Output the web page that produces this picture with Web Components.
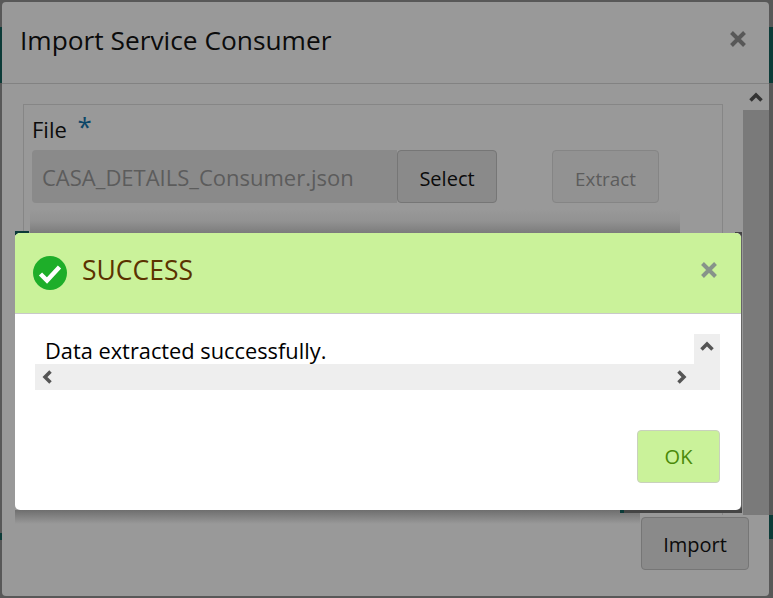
<!DOCTYPE html>
<html><head><meta charset="utf-8">
<style>
html,body{margin:0;padding:0;height:598px;overflow:hidden;background:#585858;font-family:"Open Sans","Noto Sans",sans-serif}
</style></head><body>
<template id="t-backdrop"><style>
:host{display:block;position:relative;width:773px;height:598px;box-sizing:border-box;padding:2px 4px 2px 2px;overflow:hidden}
.teal{position:absolute;background:#0c3b38}
</style>
<div class="teal" style="left:0;top:27px;width:2px;height:56px"></div>
<div class="teal" style="right:0;top:27px;width:4px;height:56px"></div>
<div class="teal" style="left:0;top:533px;width:2px;height:7px"></div>
<div class="teal" style="right:0;top:515px;width:4px;height:24px"></div>
<slot></slot></template>

<template id="t-dialog"><style>
:host{display:flex;flex-direction:column;width:767px;height:594px;background:#999;border-radius:4px;overflow:hidden;position:relative}
header{flex:none;height:82px;box-sizing:border-box;border-bottom:1px solid #828282;display:flex;align-items:center;justify-content:space-between;padding:0 22px 5px 18px;font-size:26.3px;color:#0b0b0b}
header svg{margin-bottom:2px}
.main{flex:none;height:431px;display:flex}
.content{flex:1;min-width:0;padding:20px 20px 0 21px;overflow:hidden;position:relative}
.track{flex:none;width:26px;background:#7a7a7a;display:flex;flex-direction:column}
.up{height:26px;background:#999;display:flex;align-items:center;justify-content:center}
footer{flex:1;display:flex;justify-content:flex-end;align-items:flex-start;padding:2px 20px 0 0}
svg{display:block}
</style>
<header><span>Import Service Consumer</span>
<svg width="18" height="18" viewBox="0 0 18 18"><path d="M2.500 2.500 15.500 15.500M15.500 2.500 2.500 15.500" stroke="#585858" stroke-width="4" fill="none"/></svg></header>
<div class="main"><div class="content"><slot></slot></div>
<div class="track"><div class="up"><svg width="14" height="10" viewBox="0 0 14 10"><path d="M1.500 8.500 7 3l5.500 5.500" stroke="#333" stroke-width="3.500" fill="none"/></svg></div></div></div>
<footer><slot name="foot"></slot></footer></template>

<template id="t-panel"><style>
:host{display:block;width:700px;height:420px;box-sizing:border-box;border:1px solid #868686;padding:9px 8px;position:relative}
label{display:block;font-size:22px;line-height:31px;color:#0b0b0b;height:36px}
label b{font-weight:400;color:#0b4668;font-size:26px;margin-left:5px;line-height:20px;vertical-align:2px}
.row{display:flex;align-items:flex-start}
.input{width:365px;height:53px;background:#8a8a8a;border-radius:4px 0 0 4px;box-sizing:border-box;padding:0 10px;font-size:22px;line-height:55px;color:#5c5c5c;white-space:nowrap}
.gap{width:55px}
.bar{margin:6px 0 0 -2px;width:650px;height:24px;background:linear-gradient(#999,#929292 50%,#7c7c7c)}
</style>
<label>File <b>*</b></label>
<div class="row"><div class="input">CASA_DETAILS_Consumer.json</div><app-button style="width:100px;padding:4px 0 0">Select</app-button><div class="gap"></div><app-button dim style="width:107px;padding:4px 0 0;font-size:18.8px">Extract</app-button></div>
<div class="bar"></div></template>

<template id="t-button"><style>
:host{display:inline-flex;align-items:center;justify-content:center;box-sizing:border-box;height:53px;padding:0 21px;border:1px solid #767676;border-radius:4px;background:#8a8a8a;color:#0b0b0b;font-size:20px}
:host([dim]){background:#929292;border-color:#858585;color:#5c5c5c}
:host([ok]){background:#caf29a;border-color:#c9d1bd;color:#4a8a0a;width:83px;padding:0}
</style><slot></slot></template>

<template id="t-modal"><style>
:host{display:block;position:absolute;left:15px;top:233px;width:726px;height:277px}
.card{position:relative;height:100%;background:#fff;border-radius:5px;overflow:hidden;box-shadow:1px 0 0 #666}
.u{position:absolute}
header{height:80px;background:#caf29a;border-bottom:1px solid #c9c9c9;display:flex;align-items:center;padding:0 23px 0 18px;font-size:26.5px;color:#5b3200}
header span{flex:1;margin:0 0 6px 15px}
header svg:last-child{margin-bottom:6px}
.box{margin:20px 21px 0 20px;height:56px;display:grid;grid-template-columns:1fr 26px;grid-template-rows:30px 26px;font-size:21.8px;color:#000}
.text{padding-left:10px;line-height:34px;white-space:nowrap;overflow:hidden}
.v{background:#eee;display:flex;justify-content:center;padding-top:7px;box-sizing:border-box}
.h{grid-column:1/3;background:#eee;display:flex;justify-content:space-between;align-items:center;padding:0 33px 0 7px}
.foot{display:flex;justify-content:flex-end;padding:40px 21px 0 0}
svg{display:block}
</style>
<div class="u" style="left:0;top:277px;width:625px;height:14px;background:linear-gradient(#6e6e6e,#999)"></div>
<div class="u" style="left:0;top:-2px;width:14px;height:4px;background:#0c3b38"></div>
<div class="u" style="right:-1px;top:-1px;width:7px;height:7px;background:#444"></div>
<div class="u" style="left:605px;top:272px;width:122px;height:8px;background:#454545;border-left:4px solid #0c3b38;box-sizing:border-box"></div>
<div class="card">
<header><svg width="34" height="34" viewBox="0 0 34 34"><circle cx="17" cy="17" r="17" fill="#1eae29"/><path d="M7.500 18 14 24.500 26.500 11" stroke="#fff" stroke-width="4.500" fill="none"/></svg><span>SUCCESS</span>
<svg width="18" height="18" viewBox="0 0 18 18"><path d="M2.500 2.500 15.500 15.500M15.500 2.500 2.500 15.500" stroke="#87938a" stroke-width="4" fill="none"/></svg></header>
<div class="box"><div class="text"><slot></slot></div>
<div class="v"><svg width="14" height="10" viewBox="0 0 14 10"><path d="M1.500 8.500 7 3l5.500 5.500" stroke="#555" stroke-width="3.500" fill="none"/></svg></div>
<div class="h"><svg width="10" height="14" viewBox="0 0 10 14"><path d="M8.500 1.500 3 7l5.500 5.500" stroke="#555" stroke-width="3.500" fill="none"/></svg><svg width="10" height="14" viewBox="0 0 10 14"><path d="M1.500 1.500 7 7l-5.500 5.500" stroke="#555" stroke-width="3.500" fill="none"/></svg></div></div>
<div class="foot"><app-button ok>OK</app-button></div></div></template>

<app-backdrop>
  <app-dialog>
    <app-panel></app-panel>
    <app-button slot="foot" style="width:108px;padding:2px 0 0">Import</app-button>
  </app-dialog>
  <app-modal>Data extracted successfully.</app-modal>
</app-backdrop>
<script>
for(const [tag,id] of [['app-backdrop','t-backdrop'],['app-dialog','t-dialog'],['app-panel','t-panel'],['app-button','t-button'],['app-modal','t-modal']]){
  customElements.define(tag,class extends HTMLElement{constructor(){super();this.attachShadow({mode:'open'}).appendChild(document.getElementById(id).content.cloneNode(true));}});
}
</script>
</body></html>
